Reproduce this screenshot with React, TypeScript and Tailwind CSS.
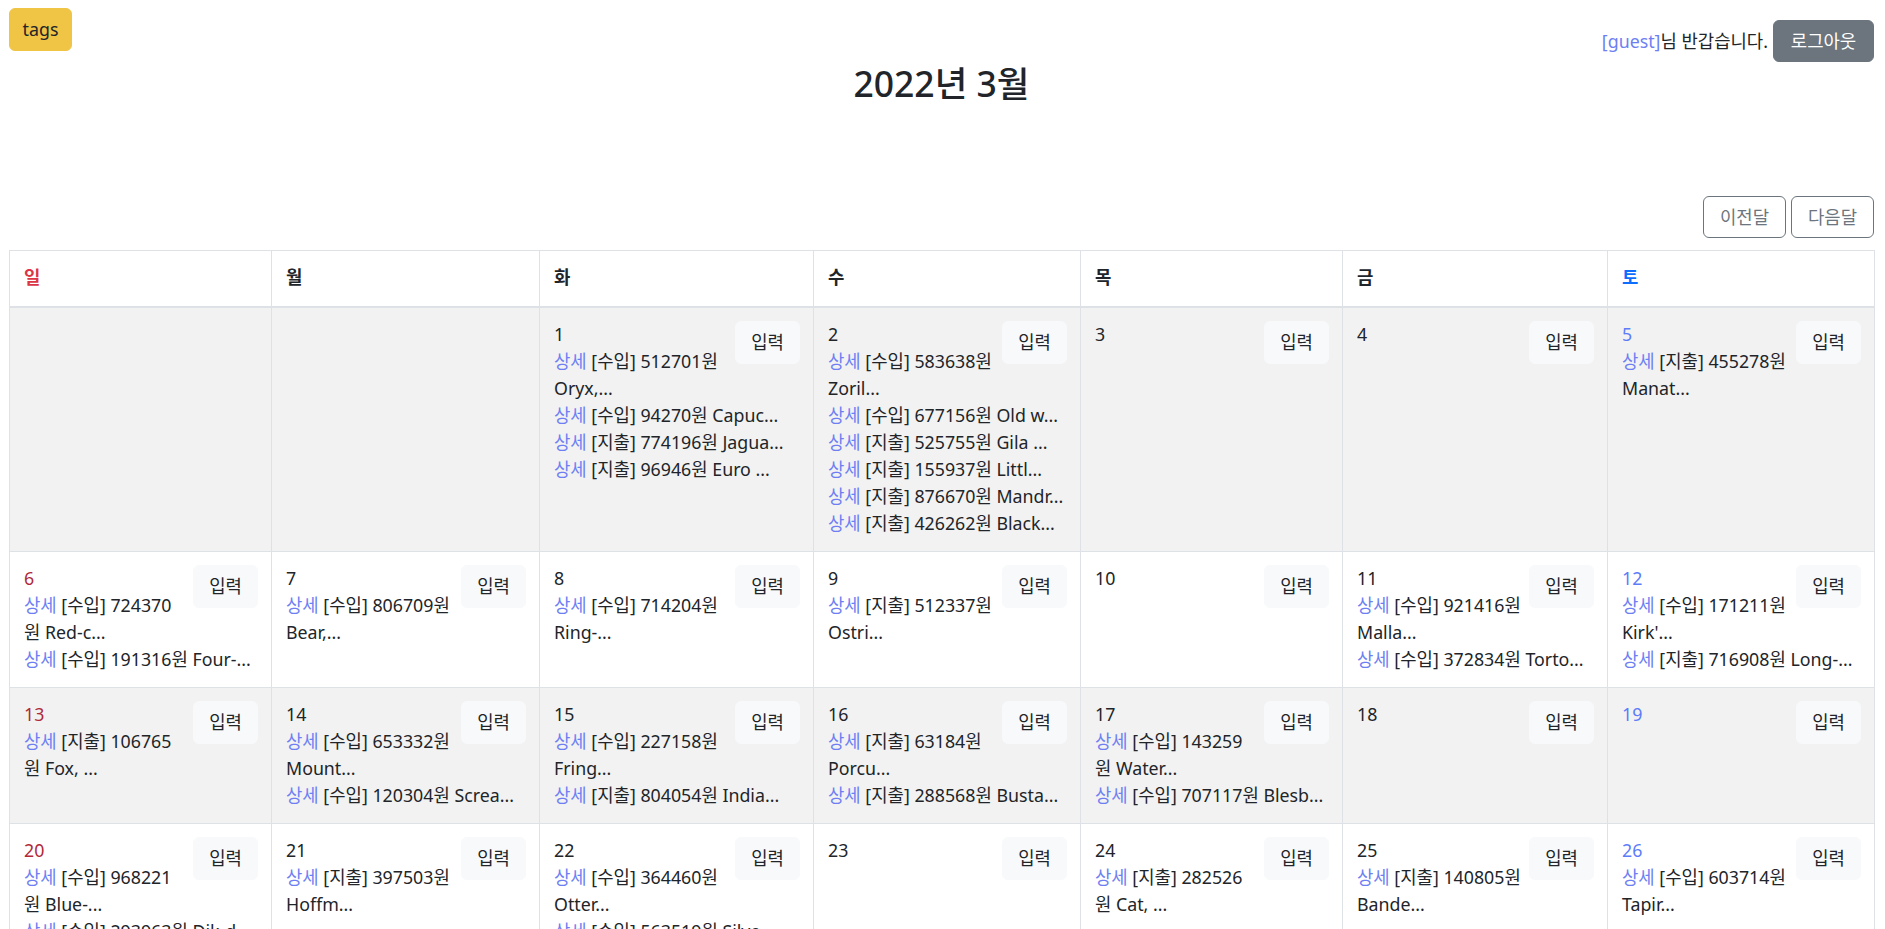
import React from 'react';

type Entry = {
  kind: '수입' | '지출';
  amount: string;
  memo: string;
  // where the line wraps in the narrow space beside the 입력 button
  brk?: 'memo' | 'won';
};

type Day = { day: number; entries: Entry[] } | null;

const e = (kind: '수입' | '지출', amount: string, memo: string, brk?: 'memo' | 'won'): Entry => ({
  kind,
  amount,
  memo,
  brk,
});

const weeks: Day[][] = [
  [
    null,
    null,
    {
      day: 1,
      entries: [
        e('수입', '512701', 'Oryx,...', 'memo'),
        e('수입', '94270', 'Capuc...'),
        e('지출', '774196', 'Jagua...'),
        e('지출', '96946', 'Euro ...'),
      ],
    },
    {
      day: 2,
      entries: [
        e('수입', '583638', 'Zoril...', 'memo'),
        e('수입', '677156', 'Old w...'),
        e('지출', '525755', 'Gila ...'),
        e('지출', '155937', 'Littl...'),
        e('지출', '876670', 'Mandr...'),
        e('지출', '426262', 'Black...'),
      ],
    },
    { day: 3, entries: [] },
    { day: 4, entries: [] },
    { day: 5, entries: [e('지출', '455278', 'Manat...', 'memo')] },
  ],
  [
    { day: 6, entries: [e('수입', '724370', 'Red-c...', 'won'), e('수입', '191316', 'Four-...')] },
    { day: 7, entries: [e('수입', '806709', 'Bear,...', 'memo')] },
    { day: 8, entries: [e('수입', '714204', 'Ring-...', 'memo')] },
    { day: 9, entries: [e('지출', '512337', 'Ostri...', 'memo')] },
    { day: 10, entries: [] },
    { day: 11, entries: [e('수입', '921416', 'Malla...', 'memo'), e('수입', '372834', 'Torto...')] },
    { day: 12, entries: [e('수입', '171211', "Kirk'...", 'memo'), e('지출', '716908', 'Long-...')] },
  ],
  [
    { day: 13, entries: [e('지출', '106765', 'Fox, ...', 'won')] },
    { day: 14, entries: [e('수입', '653332', 'Mount...', 'memo'), e('수입', '120304', 'Screa...')] },
    { day: 15, entries: [e('수입', '227158', 'Fring...', 'memo'), e('지출', '804054', 'India...')] },
    { day: 16, entries: [e('지출', '63184', 'Porcu...', 'memo'), e('지출', '288568', 'Busta...')] },
    { day: 17, entries: [e('수입', '143259', 'Water...', 'won'), e('수입', '707117', 'Blesb...')] },
    { day: 18, entries: [] },
    { day: 19, entries: [] },
  ],
  [
    { day: 20, entries: [e('수입', '968221', 'Blue-...', 'won'), e('수입', '293963', 'Dik-d...')] },
    { day: 21, entries: [e('지출', '397503', 'Hoffm...', 'memo')] },
    { day: 22, entries: [e('수입', '364460', 'Otter...', 'memo'), e('수입', '563519', 'Silve...')] },
    { day: 23, entries: [] },
    { day: 24, entries: [e('지출', '282526', 'Cat, ...', 'won')] },
    { day: 25, entries: [e('지출', '140805', 'Bande...', 'memo')] },
    { day: 26, entries: [e('수입', '603714', 'Tapir...', 'memo')] },
  ],
  [
    { day: 27, entries: [] },
    { day: 28, entries: [] },
    { day: 29, entries: [] },
    { day: 30, entries: [] },
    { day: 31, entries: [] },
    null,
    null,
  ],
];

const weekdays = ['일', '월', '화', '수', '목', '금', '토'];

function headColor(i: number) {
  if (i === 0) return 'text-[#dc3545]';
  if (i === 6) return 'text-[#0d6efd]';
  return 'text-[#212529]';
}

function dayColor(i: number) {
  if (i === 0) return 'text-[#b02a37]';
  if (i === 6) return 'text-[#5c7cfa]';
  return 'text-[#212529]';
}

function EntryLines({ entry }: { entry: Entry }) {
  const link = <a className="cursor-pointer text-[#6d7ff2]">상세</a>;
  if (entry.brk === 'memo') {
    return (
      <>
        <div className="whitespace-nowrap">
          {link} [{entry.kind}] {entry.amount}원
        </div>
        <div className="whitespace-nowrap">{entry.memo}</div>
      </>
    );
  }
  if (entry.brk === 'won') {
    return (
      <>
        <div className="whitespace-nowrap">
          {link} [{entry.kind}] {entry.amount}
        </div>
        <div className="whitespace-nowrap">원 {entry.memo}</div>
      </>
    );
  }
  return (
    <div className="whitespace-nowrap">
      {link} [{entry.kind}] {entry.amount}원 {entry.memo}
    </div>
  );
}

function DayCell({ cell, col }: { cell: Day; col: number }) {
  if (!cell) return <td className="border border-[#dee2e6] align-top" />;
  return (
    <td className="border border-[#dee2e6] pb-[14px] pl-[14px] pr-[13px] pt-[13px] align-top">
      <button className="float-right ml-[6px] flex h-[43px] w-[65px] items-center justify-center rounded-[6px] border border-[#f8f9fa] bg-[#f8f9fa] text-[#212529]">
        입력
      </button>
      <div className={dayColor(col)}>{cell.day}</div>
      {cell.entries.map((entry, k) => (
        <EntryLines key={k} entry={entry} />
      ))}
    </td>
  );
}

export default function App() {
  return (
    <div className="min-h-screen bg-white pl-[9px] pr-[11px] font-[family-name:'Noto_Sans','Noto_Sans_CJK_KR',sans-serif] text-[17.8px] leading-[27px] text-[#212529]">
      <div className="flex items-start justify-between pt-[8px]">
        <button className="flex h-[43px] w-[63px] items-center justify-center rounded-[6px] border border-[#f0c445] bg-[#f0c445] text-[#212529]">
          tags
        </button>
        <div className="mt-[12px] flex items-center gap-[5px]">
          <span>
            <a className="cursor-pointer text-[#6d7ff2]">[guest]</a>님 반갑습니다.
          </span>
          <button className="flex h-[42px] w-[101px] items-center justify-center rounded-[6px] border border-[#6c757d] bg-[#6c757d] text-white">
            로그아웃
          </button>
        </div>
      </div>

      <h2 className="h-[43px] text-center text-[35.5px] font-medium leading-[43px]">2022년 3월</h2>

      <div className="mt-[91px] flex justify-end gap-[5px]">
        <button className="flex h-[42px] w-[83px] items-center justify-center rounded-[6px] border border-[#6c757d] bg-white text-[#6c757d]">
          이전달
        </button>
        <button className="flex h-[42px] w-[83px] items-center justify-center rounded-[6px] border border-[#6c757d] bg-white text-[#6c757d]">
          다음달
        </button>
      </div>

      <table className="mt-[12px] w-full table-fixed border-collapse">
        <colgroup>
          <col className="w-[262px]" />
          <col className="w-[268px]" />
          <col className="w-[274px]" />
          <col className="w-[267px]" />
          <col className="w-[262px]" />
          <col className="w-[265px]" />
          <col className="w-[267px]" />
        </colgroup>
        <thead>
          <tr>
            {weekdays.map((w, i) => (
              <th
                key={w}
                className={`border border-b-2 border-[#dee2e6] pb-[15px] pl-[14px] pr-[13px] pt-[13px] text-left font-bold ${headColor(i)}`}
              >
                {w}
              </th>
            ))}
          </tr>
        </thead>
        <tbody>
          {weeks.map((week, r) => (
            <tr key={r} className={r % 2 === 0 ? 'bg-[#f2f2f2]' : 'bg-white'}>
              {week.map((cell, c) => (
                <DayCell key={c} cell={cell} col={c} />
              ))}
            </tr>
          ))}
        </tbody>
      </table>
    </div>
  );
}
